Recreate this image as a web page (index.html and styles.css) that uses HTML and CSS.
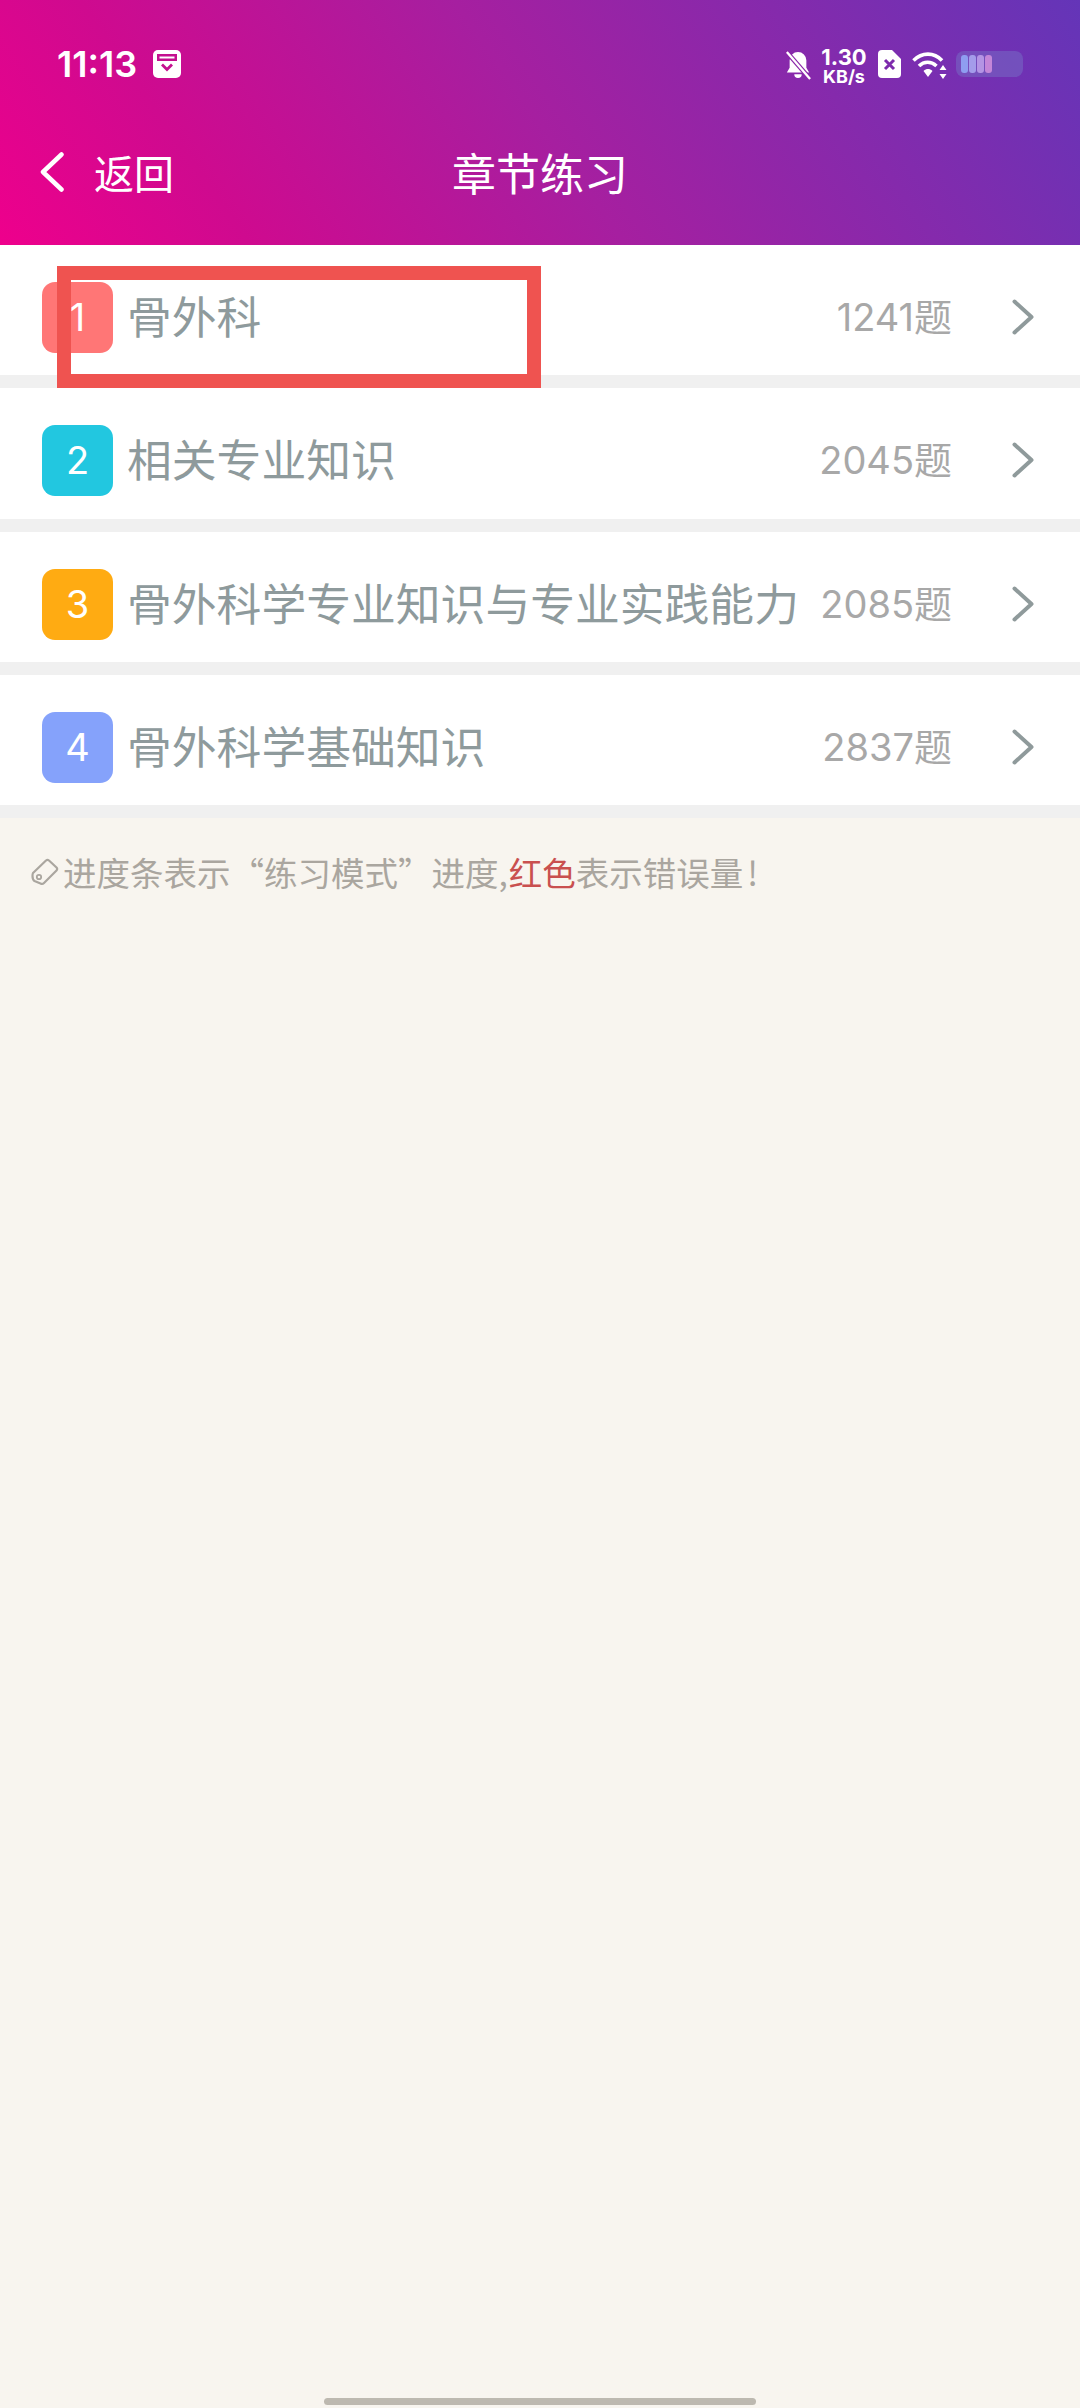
FILE: index.html
```html
<!DOCTYPE html>
<html lang="zh-CN">
<head>
<meta charset="utf-8">
<title>章节练习</title>
<link rel="stylesheet" href="styles.css">
</head>
<body>
<div class="page">
  <header class="header">
    <div class="status">
      <span class="time">11:13</span>
      <svg class="cal" viewBox="0 0 28 28"><path fill="#fff" d="M5 0h18a5 5 0 0 1 5 5v18a5 5 0 0 1-5 5H5a5 5 0 0 1-5-5V5a5 5 0 0 1 5-5z"/><path fill="#c4108f" d="M4 4h20v7H4z"/><path fill="#fff" d="M6.500 6.500h15v2h-15z"/><path fill="none" stroke="#c4108f" stroke-width="2.800" d="M9 14.500l5 5 5-5"/></svg>
      <span class="status-spacer"></span>
      <svg class="bell" viewBox="0 0 28 30"><path fill="#fff" d="M14 1a9 9 0 0 1 9 9v8l3 5H2l3-5v-8a9 9 0 0 1 9-9zM10 25h8a4 4 0 0 1-8 0z"/><path stroke="#8a27a8" stroke-width="5" d="M1 0l26 30"/><path stroke="#fff" stroke-width="2.500" d="M2 1l25 29"/></svg>
      <div class="speed"><span class="speed-num">1.30</span><span class="speed-unit">KB/s</span></div>
      <svg class="sim" viewBox="0 0 23 28"><path fill="#fff" d="M4 0h10l9 9v15a4 4 0 0 1-4 4H4a4 4 0 0 1-4-4V4a4 4 0 0 1 4-4z"/><path stroke="#7d2bac" stroke-width="3" d="M7 10l9 9M16 10l-9 9"/></svg>
      <svg class="wifi" viewBox="0 0 35 28"><g fill="none" stroke="#fff" stroke-width="3.600"><path d="M1.500 9.500C10 1 22 1 30 9.500"/><path d="M7 15c5-5 12-5 17.500 0"/></g><path fill="#fff" d="M11.500 20c3-2.600 6-2.600 9 0l-4.500 6z"/><path fill="#fff" d="M31 14l3.500 5h-7zM31 28l-3.500-5h7z"/></svg>
      <div class="battery">
        <span class="cell cell-a"></span><span class="cell cell-b"></span><span class="cell cell-c"></span><span class="cell cell-d"></span>
      </div>
    </div>
    <nav class="nav">
      <div class="back">
        <svg class="back-icon" viewBox="0 0 24 40"><path fill="none" stroke="#fff" stroke-width="4.500" stroke-linecap="round" stroke-linejoin="round" d="M21.500 2.500L3 20l18.500 17.500"/></svg>
        <span>返回</span>
      </div>
      <h1 class="title">章节练习</h1>
      <span></span>
    </nav>
  </header>

  <main class="list">
    <div class="row">
      <span class="badge badge-red">1</span>
      <span class="name">骨外科</span>
      <span class="count">1241题</span>
      <svg class="chev" viewBox="0 0 22 36"><path fill="none" stroke="#8f9a9b" stroke-width="4" stroke-linecap="round" stroke-linejoin="round" d="M2.500 2.500L19.500 18L2.500 33.500"/></svg>
    </div>
    <div class="row">
      <span class="badge badge-cyan">2</span>
      <span class="name">相关专业知识</span>
      <span class="count">2045题</span>
      <svg class="chev" viewBox="0 0 22 36"><path fill="none" stroke="#8f9a9b" stroke-width="4" stroke-linecap="round" stroke-linejoin="round" d="M2.500 2.500L19.500 18L2.500 33.500"/></svg>
    </div>
    <div class="row">
      <span class="badge badge-orange">3</span>
      <span class="name">骨外科学专业知识与专业实践能力</span>
      <span class="count">2085题</span>
      <svg class="chev" viewBox="0 0 22 36"><path fill="none" stroke="#8f9a9b" stroke-width="4" stroke-linecap="round" stroke-linejoin="round" d="M2.500 2.500L19.500 18L2.500 33.500"/></svg>
    </div>
    <div class="row">
      <span class="badge badge-blue">4</span>
      <span class="name">骨外科学基础知识</span>
      <span class="count">2837题</span>
      <svg class="chev" viewBox="0 0 22 36"><path fill="none" stroke="#8f9a9b" stroke-width="4" stroke-linecap="round" stroke-linejoin="round" d="M2.500 2.500L19.500 18L2.500 33.500"/></svg>
    </div>
  </main>

  <p class="note">
    <svg class="tag" viewBox="0 0 28 28"><path fill="none" stroke="#aaa69f" stroke-width="2.200" stroke-linejoin="round" d="M2 15L15 2.500c1-.8 2-.8 3 0l7.500 7c.8.9.8 2 0 2.900L13 25c-1 1-2.500 1-3.500.5L3.500 23C2 22 1.500 20 1.500 18c0-1.200 0-2.200.5-3z"/><circle cx="8" cy="19" r="2.200" fill="none" stroke="#aaa69f" stroke-width="1.800"/></svg>
    <span>进度条表示“练习模式”进度,<em class="red">红色</em>表示错误量<span class="bang">!</span></span>
  </p>

  <div class="home"></div>
  <div class="mark"></div>
</div>
</body>
</html>
```
FILE: styles.css
```css
* { box-sizing: border-box; }
html, body { margin: 0; padding: 0; }
body {
  font-family: "Noto Sans", "Noto Sans CJK SC", sans-serif;
  background: #f8f5ef;
}
.page {
  position: relative;
  width: 1080px;
  height: 2408px;
  display: flex;
  flex-direction: column;
  overflow: hidden;
  background: #f8f5ef;
}

/* header */
.header {
  height: 245px;
  color: #fff;
  background: linear-gradient(55deg, #ee008c 0%, #cf0a8f 20%, #a61fa0 50%, #6435b8 100%);
}
.status {
  height: 84px;
  padding: 46px 57px 0;
  display: flex;
  align-items: flex-start;
}
.time {
  font-family: "Inter", "Noto Sans", sans-serif;
  font-size: 36px;
  font-weight: 600;
  line-height: 36px;
  width: 96px;
}
.cal { width: 28px; height: 28px; margin-top: 4px; }
.status-spacer { flex: 1; }
.bell { width: 26px; height: 30px; margin-top: 4px; margin-right: 12px; }
.speed {
  display: flex;
  flex-direction: column;
  align-items: center;
  width: 42px;
  margin-right: 13px;
  font-family: "Inter", "Noto Sans", sans-serif;
  font-weight: 700;
}
.speed-num { font-size: 22px; line-height: 22px; }
.speed-unit { font-size: 18px; line-height: 18px; }
.sim { width: 23px; height: 28px; margin-top: 4px; margin-right: 11px; }
.wifi { width: 35px; height: 28px; margin-top: 5px; margin-right: 9px; }
.battery {
  width: 67px;
  height: 26px;
  margin-top: 5px;
  padding: 4px 5px;
  display: flex;
  gap: 1px;
  border-radius: 8px;
  background: rgba(120, 120, 200, 0.45);
}
.cell { width: 7px; border-radius: 3px; }
.cell-a { background: #8f9df0; }
.cell-b { background: #a49cea; }
.cell-c { background: #b494e4; }
.cell-d { background: #c486d8; }

.nav {
  height: 161px;
  padding: 59px 40px 0;
  display: grid;
  grid-template-columns: 1fr auto 1fr;
  align-items: start;
}
.back {
  display: flex;
  align-items: center;
  gap: 30px;
  font-size: 40px;
  height: 58px;
  font-family: "Noto Sans CJK SC", sans-serif;
}
.back-icon { width: 24px; height: 40px; }
.title {
  margin: 0;
  font-family: "Noto Sans CJK SC", sans-serif;
  font-size: 44px;
  font-weight: 400;
  line-height: 58px;
}

/* list */
.list { display: flex; flex-direction: column; }
.row {
  height: 143.25px;
  padding: 37px 46px 0 42px;
  display: flex;
  align-items: flex-start;
  background: #fff;
  border-bottom: 13px solid #f0f0f0;
}
.badge {
  width: 71px;
  height: 71px;
  border-radius: 13px;
  color: #fff;
  font-family: "Inter", "Noto Sans", sans-serif;
  font-size: 38px;
  line-height: 71px;
  text-align: center;
  flex: none;
}
.badge-red { background: #ff7676; }
.badge-cyan { background: #22c7e0; }
.badge-orange { background: #ffab12; }
.badge-blue { background: #85a2fb; }
.name {
  flex: 1;
  margin-left: 14px;
  font-family: "Noto Sans CJK SC", sans-serif;
  font-size: 44.8px;
  line-height: 66px;
  color: #8e9a9c;
  white-space: nowrap;
}
.count {
  font-family: "Inter", "Noto Sans CJK SC", sans-serif;
  font-size: 38px;
  line-height: 71px;
  color: #a8a8a8;
  white-space: nowrap;
}
.chev { width: 22px; height: 36px; margin: 17px 0 0 60px; flex: none; }

/* note */
.note {
  margin: 32px 0 0 31px;
  display: flex;
  align-items: center;
  gap: 4px;
  font-family: "Noto Sans CJK SC", sans-serif;
  font-size: 33.5px;
  line-height: 44px;
  color: #aaa69f;
}
.tag { width: 28px; height: 28px; flex: none; }
.red { color: #c9504f; font-style: normal; margin-left: 1px; }
.bang { margin-left: 4px; }

/* home indicator */
.home {
  margin: auto auto 3px;
  width: 432px;
  height: 7px;
  border-radius: 4px;
  background: #bdb9b0;
}

/* red annotation drawn over the list */
.mark {
  position: absolute;
  left: 57px;
  top: 266px;
  width: 484px;
  height: 122px;
  border: 14px solid #ef5350;
}
```
